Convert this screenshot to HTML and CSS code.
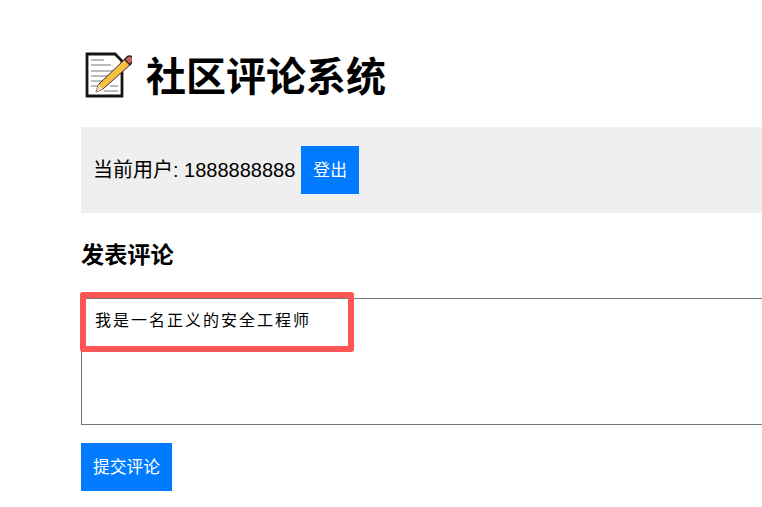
FILE: index.html
```html
<!DOCTYPE html>
<html lang="zh-CN">
<head>
    <meta charset="UTF-8">
    <meta name="viewport" content="width=device-width, initial-scale=1.0">
    <title>社区评论系统</title>
    <link rel="stylesheet" href="styles.css">
</head>
<body>
    <div class="container">
        <h1>
            <svg class="memo-icon" viewBox="0 0 48 48" aria-hidden="true">
                <path d="M3 3H31L38 10V45H3Z" fill="#fff" stroke="#141414" stroke-width="2.8"/>
                <path d="M7 9H20M7 14H27M7 20H30M7 25H26M7 30H21M7 35H16M26 35H34M20 40H34" stroke="#a6a6a6" stroke-width="1.7"/>
                <path d="M41 8L46.5 13.5L19 38L12 41L14.5 33.5Z" fill="#f8c040" stroke="#333" stroke-width="1"/>
                <path d="M40.5 8.5L43 6A3 3 0 0 1 48 11L46 14Z" fill="#c9605a" stroke="#222" stroke-width="1.4"/>
                <path d="M14.5 33.5L12 41L19 38Z" fill="#f2d9b5"/>
            </svg>
            <span>社区评论系统</span>
        </h1>

        <div class="user-bar">
            <span>当前用户: 1888888888</span>
            <button type="button" class="btn">登出</button>
        </div>

        <h3>发表评论</h3>

        <form class="comment-form">
            <div class="comment-box">
                <textarea readonly>我是一名正义的安全工程师</textarea>
                <div class="highlight"></div>
            </div>
            <button type="submit" class="btn">提交评论</button>
        </form>
    </div>
</body>
</html>
```

FILE: styles.css
```css
html, body {
    overflow: hidden;
}
body {
    font-family: "Liberation Sans", "Noto Sans CJK SC", sans-serif;
    background-color: #fff;
    color: #000;
    margin: 0;
    padding: 0;
}
.container {
    width: 800px;
    margin-left: 81px;
}
h1 {
    display: flex;
    align-items: center;
    gap: 14px;
    height: 48px;
    margin: 0;
    padding: 51px 0 28px;
    font-size: 40px;
    font-weight: bold;
}
h1 span {
    margin-bottom: 2px;
}
.memo-icon {
    width: 48px;
    height: 48px;
    margin-left: 3px;
    flex-shrink: 0;
}
.user-bar {
    display: flex;
    align-items: center;
    gap: 6px;
    height: 86px;
    padding-left: 12px;
    background-color: #efefef;
    font-size: 20px;
}
.user-bar span {
    margin-bottom: 4px;
}
.btn {
    padding: 0 12px 2px;
    height: 48px;
    border: none;
    background-color: #007bff;
    color: #fff;
    font-family: inherit;
    font-size: 16.8px;
}
h3 {
    margin: 27px 0 28px;
    font-size: 23.2px;
    line-height: 30px;
    font-weight: bold;
}
.comment-box {
    position: relative;
}
textarea {
    display: block;
    box-sizing: border-box;
    width: 100%;
    height: 127px;
    padding: 8px 13px;
    border: 1px solid #767676;
    font-family: "Noto Sans CJK SC", sans-serif;
    font-size: 16px;
    letter-spacing: 2px;
    resize: none;
    outline: none;
}
.highlight {
    position: absolute;
    left: -1px;
    top: -6px;
    width: 274px;
    height: 60px;
    box-sizing: border-box;
    border: 6px solid #ff5555;
    border-radius: 3px;
}
.comment-form .btn {
    display: block;
    margin-top: 18px;
}
```
